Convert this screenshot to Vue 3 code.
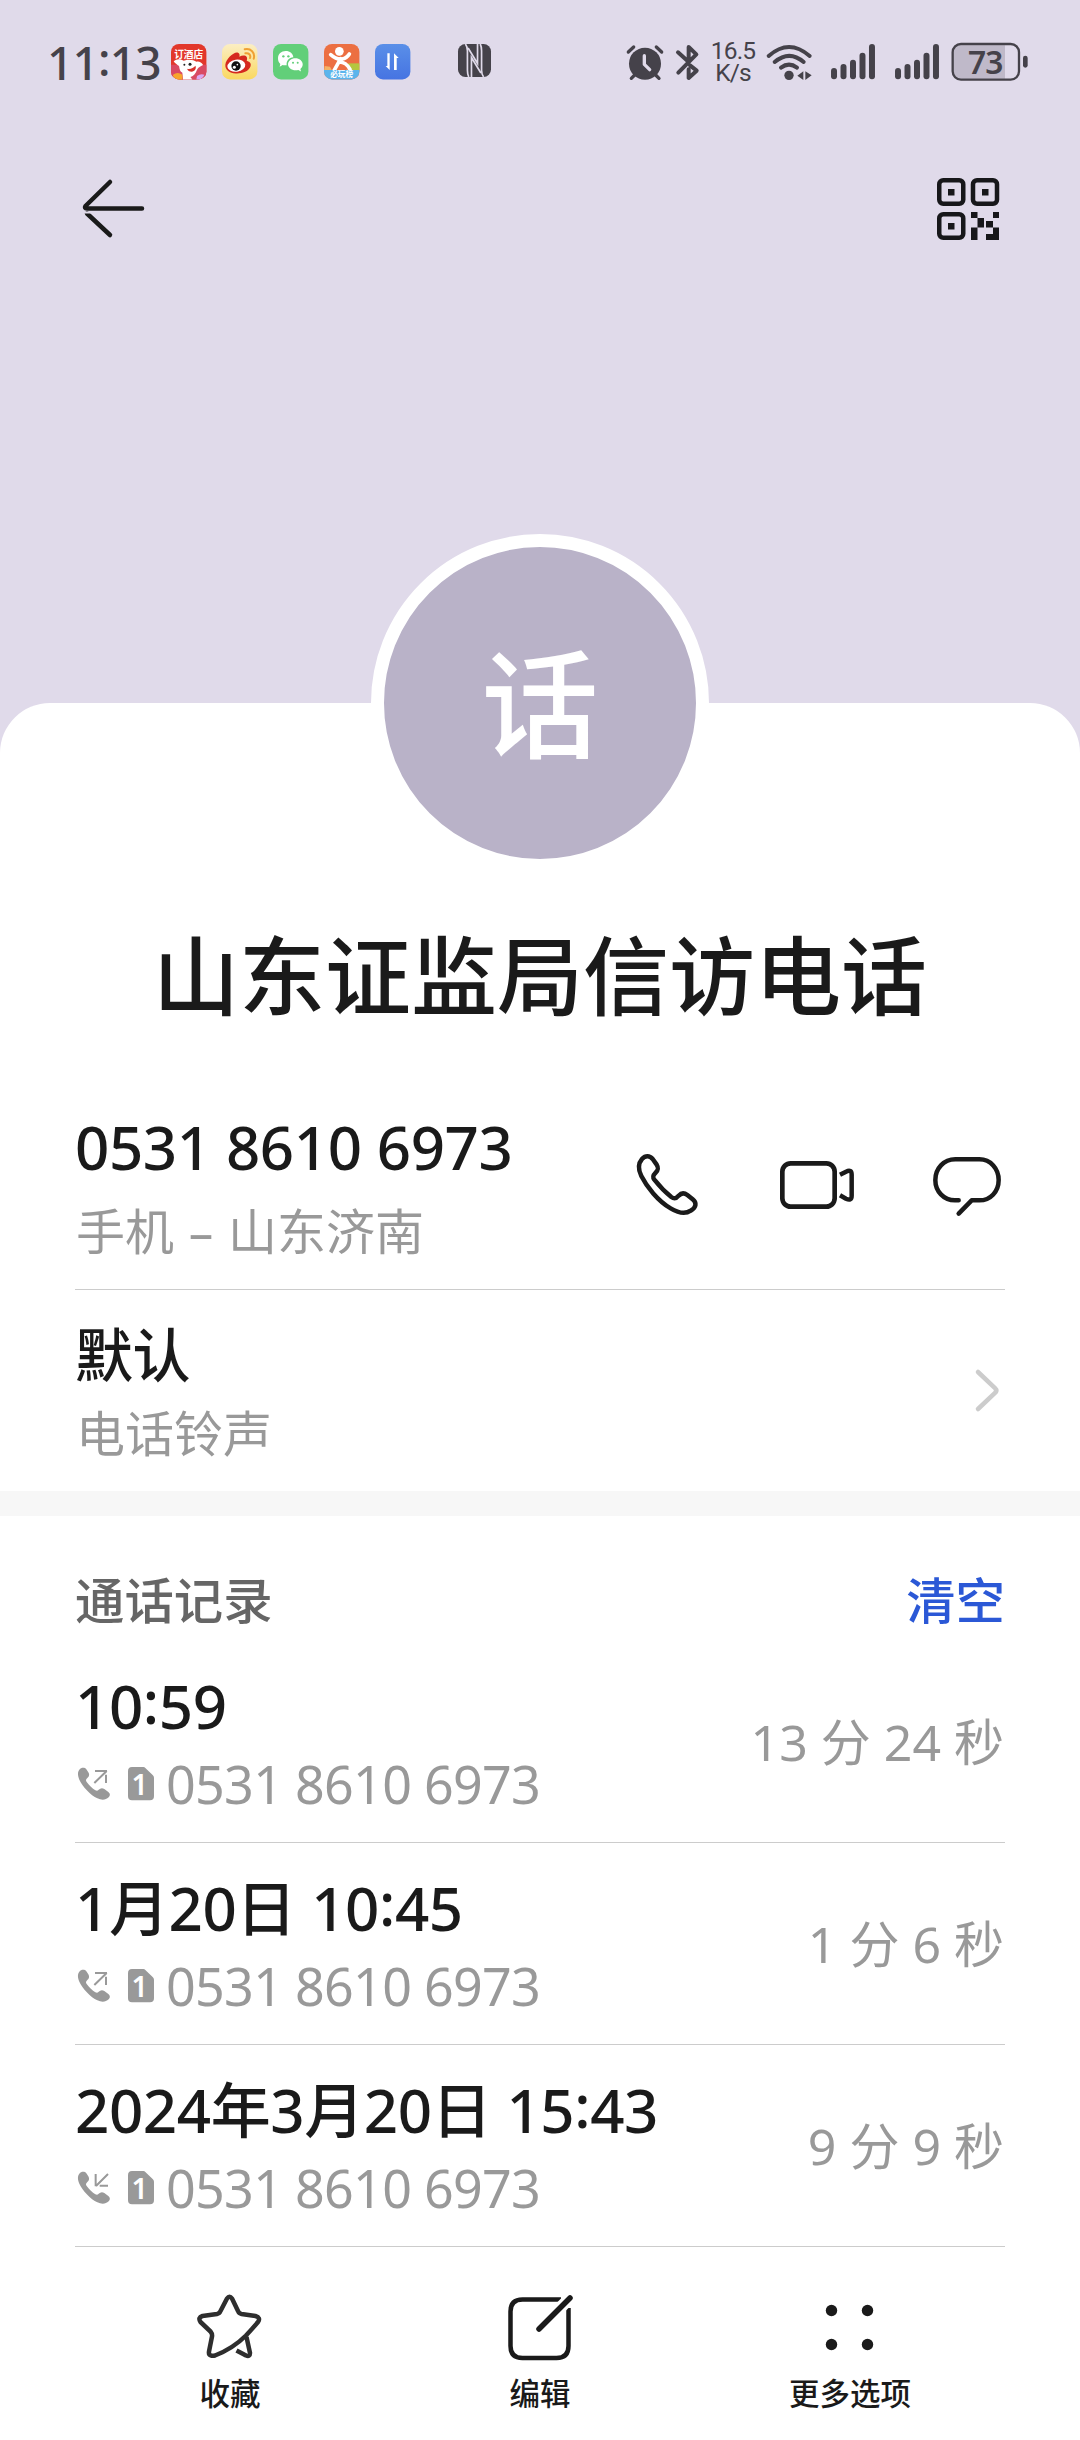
<template>
  <div class="contact-page">
    <header class="hero">
      <div class="status-bar">
        <span class="clock">11<span class="colon">:</span>13</span>

        <div class="app-icons">
          <!-- hotel / shopping app -->
          <svg class="app-icon" viewBox="0 0 106 106">
            <rect width="106" height="106" rx="24" fill="#e2372b" />
            <path d="M0 62h106v20a24 24 0 0 1-24 24H24A24 24 0 0 1 0 82z" fill="#d94a63" />
            <text x="53" y="42" class="app-text" font-size="29" fill="#fff">订酒店</text>
            <path d="M8 52c8-9 22-8 30-2 12-5 30-4 38 3 8-2 16 2 20 10-8 5-14 6-18 14-4 12-12 20-20 22l6 7H36l-2-20C26 82 26 74 24 66 18 62 12 58 8 52z" fill="#fff" />
            <circle cx="40" cy="62" r="3" fill="#222" />
            <circle cx="57" cy="61" r="4.500" fill="#222" />
            <path d="M48 74c10 2 20-2 25-9 4 8-2 17-11 18-7 0-12-3-14-9z" fill="#d8312b" />
            <path d="M6 92q14-10 28 0v14H20Q10 104 6 96z" fill="#f8a52b" />
            <path d="M78 96q10-8 22-4-5 12-16 14h-8z" fill="#d9a8f0" />
          </svg>
          <!-- weibo -->
          <svg class="app-icon" viewBox="0 0 106 106">
            <defs>
              <linearGradient id="weibo" x1="0" y1="0" x2="0" y2="1">
                <stop offset="0" stop-color="#fbeec4" />
                <stop offset="1" stop-color="#fad860" />
              </linearGradient>
            </defs>
            <rect width="106" height="106" rx="24" fill="url(#weibo)" />
            <path d="M10 62C12 44 36 22 48 26c6 3 5 8 4 12 8-4 18-5 22 1 2 4 1 8 0 11 10 3 15 9 11 18-6 15-26 21-44 20C23 87 9 78 10 62z" fill="#d5291f" />
            <ellipse cx="43" cy="65" rx="27" ry="18" fill="#fff" transform="rotate(-8 43 65)" />
            <circle cx="42" cy="66" r="14" fill="#111" />
            <circle cx="37" cy="70" r="4.500" fill="#fff" />
            <circle cx="46" cy="62" r="2.500" fill="#fff" />
            <path d="M68 16c18-4 32 10 27 28M70 28c10-2 17 5 14 14" fill="none" stroke="#f0a033" stroke-width="6" stroke-linecap="round" />
          </svg>
          <!-- wechat -->
          <svg class="app-icon" viewBox="0 0 106 106">
            <rect width="106" height="106" rx="24" fill="#62cf79" />
            <path d="M38 21c13 0 22 8 23 19-13 1-22 11-20 24-4 0-9 0-12-1l-9 5 2-8c-5-4-7-9-7-17 0-13 10-22 23-22z" fill="#fff" />
            <path d="M67 43c12 0 22 8 22 18 0 6-3 11-7 14l2 7-8-4c-17 4-31-5-31-17 0-10 10-18 22-18z" fill="#fff" />
            <g fill="#62cf79">
              <circle cx="31" cy="37" r="3.500" />
              <circle cx="46" cy="37" r="3.500" />
              <circle cx="60" cy="56" r="3" />
              <circle cx="74" cy="56" r="3" />
            </g>
          </svg>
          <!-- reviews app -->
          <svg class="app-icon" viewBox="0 0 106 106">
            <rect width="106" height="106" rx="24" fill="#ec6f42" />
            <path d="M72 58h34v22H72z" fill="#b5c63f" />
            <path d="M2 66l16 2 8 14H0z" fill="#f4b266" />
            <circle cx="46" cy="22" r="13" fill="#fff" />
            <path d="M20 32q18 16 34 13 14-2 22-15M50 44L30 80M46 54q20 0 32 22" fill="none" stroke="#fff" stroke-width="11" stroke-linecap="round" />
            <path d="M0 78h106v4a24 24 0 0 1-24 24H24A24 24 0 0 1 0 82z" fill="#5bb4ec" />
            <text x="53" y="100" class="app-text" font-size="23" fill="#fff">必玩榜</text>
          </svg>
          <!-- data transfer -->
          <svg class="app-icon" viewBox="0 0 106 106">
            <defs>
              <linearGradient id="transfer" x1="0" y1="0" x2="0" y2="1">
                <stop offset="0" stop-color="#5a8fe8" />
                <stop offset="1" stop-color="#4674e2" />
              </linearGradient>
            </defs>
            <rect width="106" height="106" rx="24" fill="url(#transfer)" />
            <path d="M37 28h7v50L32 66h5zM57 28l14 14h-6v36h-8z" fill="#fff" />
          </svg>
        </div>

        <svg class="nfc" viewBox="0 0 98 98">
          <rect width="98" height="98" rx="22" fill="#45424a" />
          <path d="M22 0q6 8 6 20v58q0 12 4 20M76 98q-6-8-6-20V20q0-12-4-20" fill="none" stroke="#e0daea" stroke-width="5" />
          <path d="M40 98V40l28 46M58 0v58L30 12" fill="none" stroke="#e0daea" stroke-width="5" />
        </svg>

        <div class="status-right">
          <svg class="status-system" viewBox="75 60 225 120" width="75" height="40">
            <circle cx="135" cy="125" r="48" fill="#45424a" />
            <path d="M133 101v26l16 16" fill="none" stroke="#e0daea" stroke-width="10" stroke-linecap="round" stroke-linejoin="round" />
            <path d="M85 90l16-15M169 75l16 15M94 169l10-10M177 169l-10-10" class="st" stroke-width="10" />
            <path d="M234 91l29 26M266 114V75l23 22-54 55M270 130l20 16-24 22v-26" class="st" stroke-width="12" />
          </svg>
          <div class="net-speed">
            <span>16.5</span>
            <span>K/s</span>
          </div>
          <svg class="wifi" viewBox="492 60 144 120" width="48" height="40">
            <path d="M503 102q61-54 123 0M521 120q44-37 87 0M540 137q24-18 48 0" class="st" stroke-width="12" />
            <circle cx="564" cy="160" r="14" fill="#45424a" />
            <path d="M589 161l18-13v26zM613 148l19 12-19 14z" fill="#45424a" />
          </svg>
          <svg v-for="n in 2" :key="n" class="signal" viewBox="0 0 132 106" width="44" height="35.300">
            <rect v-for="bar in signalBars" :key="bar.x" :x="bar.x" :y="bar.y" width="18" :height="106 - bar.y" rx="9" fill="#45424a" />
          </svg>
          <svg class="battery" viewBox="1053 62 234 120" width="78" height="40">
            <path d="M1080 72h135v100h-135q-20 0-20-20V92q0-20 20-20z" fill="#bfb9c9" />
            <rect x="1058" y="68" width="199" height="107" rx="25" fill="none" stroke="#45424a" stroke-width="7" />
            <rect x="1269" y="103" width="14" height="36" rx="7" fill="#45424a" />
            <text x="1156" y="158" class="battery-text">73</text>
          </svg>
        </div>
      </div>

      <nav class="nav-bar">
        <button class="icon-button">
          <svg viewBox="80 176 66 66" width="66" height="66">
            <path d="M110 182L85.500 206q-1.500 2.500 1.500 2.500H142" class="line" stroke-width="4.500" />
            <path d="M87 213.500L110 235" class="line" stroke-width="4.500" />
            <path d="M82 211.500h10v2H82z" fill="#e0daea" />
          </svg>
        </button>
        <button class="icon-button">
          <svg viewBox="0 0 62 62" width="62" height="62">
            <g fill="none" stroke="#17171a" stroke-width="4.500">
              <rect x="2.250" y="2.250" width="24" height="23.500" rx="4" />
              <rect x="36" y="2.250" width="24" height="23.500" rx="4" />
              <rect x="2.250" y="36.250" width="24" height="23.500" rx="4" />
            </g>
            <path d="M11 11h6.500v6.500H11zM45 11h6.500v6.500H45zM11 45h6.500v6.500H11zM34 34h6.500v6H34zM56 34h6v6h-6zM40.500 40h6.500v9.500h-6.500zM49 43h7v6.500h-7zM34 49.500h6.500V62H34zM56 49.500h6V62H49v-6h7z" fill="#17171a" />
          </svg>
        </button>
      </nav>
    </header>

    <main class="card">
      <div class="avatar">{{ contact.initial }}</div>
      <h1 class="contact-name">{{ contact.name }}</h1>

      <section class="phone-row">
        <div class="phone-text">
          <p class="row-title">{{ contact.phone }}</p>
          <p class="row-subtitle">手机<span class="dash">–</span>山东济南</p>
        </div>
        <div class="phone-actions">
          <button class="icon-button">
            <svg viewBox="81 75 240 240" width="80" height="80">
              <path d="M158 117c-9-11-22-11-32 0-12 14-12 31-2 51 16 32 50 75 88 97 23 14 44 18 60 7 18-10 18-24 6-34l-16-13c-10-8-18-7-26 2-8 10-14 10-22 4-19-15-36-33-51-52-6-8-4-13 4-21 9-9 9-14 3-24z" class="line" stroke-width="13.500" />
            </svg>
          </button>
          <button class="icon-button">
            <svg viewBox="531 75 240 240" width="80" height="80">
              <rect x="547" y="130" width="157" height="130" rx="25" class="line" stroke-width="14" />
              <path d="M720 164l18-9q17-8 17 9v63q0 17-17 9l-18-10" class="line butt" stroke-width="13.500" />
            </svg>
          </button>
          <button class="icon-button">
            <svg viewBox="981 75 240 240" width="80" height="80">
              <path d="M1076 241h-11c-34 0-59-27-59-61s25-62 60-62h72c34 0 58 28 58 62s-24 61-58 61h-23l-39 40" class="line" stroke-width="13.500" />
            </svg>
          </button>
        </div>
      </section>

      <section class="ringtone-row">
        <div>
          <p class="row-title">默认</p>
          <p class="row-subtitle">电话铃声</p>
        </div>
        <svg class="chevron" viewBox="0 0 30 50" width="30" height="50">
          <path d="M3 6l17 16q2.500 2.500 0 5L3 43" fill="none" stroke="#ccc" stroke-width="4.500" stroke-linecap="round" />
        </svg>
      </section>

      <div class="band"></div>

      <section class="call-log">
        <div class="log-header">
          <h2>通话记录</h2>
          <button class="clear-button">清空</button>
        </div>

        <div v-for="call in calls" :key="call.hour" class="log-row">
          <div>
            <p class="row-title">{{ call.hour }}<span class="colon">:</span>{{ call.minute }}</p>
            <p class="log-detail">
              <svg viewBox="51 345 102 105" width="34" height="35">
                <path d="M58 356c6-7 16-7 21-1l6 9c4 7 3 12-3 17-5 5-5 8-2 12 8 11 17 19 26 25 4 2 7 2 10-2 5-5 11-6 17-2l12 9c6 5 6 11 1 16-9 9-22 9-34 3-20-10-44-34-54-56-5-12-6-23 0-30z" fill="#999" />
                <path v-if="call.type === 'out'" d="M103 396l37-36M105 360h36M138 371v25" fill="none" stroke="#999" stroke-width="6" />
                <path v-else d="M144 357l-36 36M107 357v37M119 392h25" fill="none" stroke="#999" stroke-width="6" />
              </svg>
              <svg class="sim" viewBox="204 350 78 100" width="26" height="33.300">
                <path d="M216 350h34q4 0 6 3l22 21q4 4 4 8v56q0 12-12 12h-54q-12 0-12-12v-76q0-12 12-12z" fill="#999" />
                <text x="239" y="433" class="sim-text">1</text>
              </svg>
              <span class="log-number">{{ contact.phone }}</span>
            </p>
          </div>
          <span class="duration">{{ call.duration }}</span>
        </div>
      </section>

      <footer class="toolbar">
        <button class="tool">
          <svg viewBox="195 2292 70 70" width="70" height="70">
            <path d="M211 2355.500q-2.500-.5-2-4l3-15q.5-2.500-1.500-5l-10-9.500q-3-4.500 2-6l14.500-2q2.500-.5 3.500-3l6.500-12.500q2.500-3.500 5 0l6 12.500q1 2.500 3.500 3l14 2q5.500 1.500 2.500 6-6 7-12 13.500-13 13-31 20-2.500.7-4 0z" class="line soft" stroke-width="4.500" />
            <path d="M246.500 2337l3.500 16q0 4-4 2.500l-9.500-5" class="line soft butt" stroke-width="4.500" />
          </svg>
          <span>收藏</span>
        </button>
        <button class="tool">
          <svg viewBox="505 2292 70 70" width="70" height="70">
            <path d="M561 2299.500h-38.500q-12 0-12 12V2346q0 12 12 12h34q12 0 12-12v-38" class="line butt" stroke-width="4.500" />
            <path d="M539 2329l31-31" class="gap" />
            <path d="M539 2329l31-31" class="line" stroke-width="5.500" />
          </svg>
          <span>编辑</span>
        </button>
        <button class="tool">
          <svg viewBox="815 2292 70 70" width="70" height="70">
            <g fill="#1a1a1a">
              <circle cx="831.500" cy="2310.500" r="5.700" />
              <circle cx="867.500" cy="2310.500" r="5.700" />
              <circle cx="831.500" cy="2344.500" r="5.700" />
              <circle cx="867.500" cy="2344.500" r="5.700" />
            </g>
          </svg>
          <span>更多选项</span>
        </button>
      </footer>
    </main>
  </div>
</template>

<script setup>
import { ref } from 'vue'

const contact = {
  initial: '话',
  name: '山东证监局信访电话',
  phone: '0531 8610 6973'
}

const calls = ref([
  { hour: '10', minute: '59', type: 'out', duration: '13 分 24 秒' },
  { hour: '1月20日 10', minute: '45', type: 'out', duration: '1 分 6 秒' },
  { hour: '2024年3月20日 15', minute: '43', type: 'in', duration: '9 分 9 秒' }
])

const signalBars = [
  { x: 0, y: 72 },
  { x: 28.5, y: 60 },
  { x: 57, y: 47 },
  { x: 85.5, y: 26 },
  { x: 114, y: 0 }
]
</script>

<style>
body {
  margin: 0;
  background: #fff;
}
</style>

<style scoped>
.contact-page {
  width: 1080px;
  height: 2440px;
  overflow: hidden;
  background: #e0daea;
  color: #1a1a1a;
  font-family: "Noto Sans", "Noto Sans CJK SC", sans-serif;
}

.contact-page * {
  box-sizing: border-box;
}

p,
h1,
h2 {
  margin: 0;
}

svg {
  display: block;
  flex: none;
  overflow: visible;
}

button {
  padding: 0;
  border: none;
  background: none;
  color: inherit;
  font: inherit;
}

.hero {
  height: 703px;
}

/* status bar */
.status-bar {
  display: flex;
  align-items: center;
  height: 123px;
  padding: 0 51px 0 47px;
  color: #45424a;
}

.clock {
  width: 124px;
  font-size: 46px;
  font-weight: 500;
  letter-spacing: -0.800px;
  line-height: 60px;
  white-space: nowrap;
}

/* sits at the middle of the digits */
.colon {
  line-height: 0;
  vertical-align: 0.080em;
}

.app-icons {
  display: flex;
  gap: 15.600px;
}

.app-icon {
  width: 35.400px;
  height: 35.400px;
}

.app-text {
  font-weight: 700;
  text-anchor: middle;
}

.nfc {
  width: 33px;
  height: 33px;
  margin: 0 auto 3px 48px;
}

.status-right {
  display: flex;
  align-items: center;
}

.net-speed {
  display: flex;
  flex-direction: column;
  width: 54px;
  margin: 0 5px 0 6px;
  font-family: Roboto, sans-serif;
  font-size: 24.500px;
  letter-spacing: -0.800px;
  line-height: 22px;
  text-align: center;
}

.wifi {
  margin-right: 18px;
}

.signal {
  margin-right: 20px;
}

.signal + .battery {
  margin-left: -8px;
}

.st {
  fill: none;
  stroke: #45424a;
  stroke-linecap: round;
  stroke-linejoin: round;
}

.battery-text {
  fill: #45424a;
  font-size: 95px;
  font-weight: 600;
  letter-spacing: -2px;
  text-anchor: middle;
}

/* top navigation */
.nav-bar {
  display: flex;
  align-items: center;
  justify-content: space-between;
  height: 172px;
  padding: 0 81px 0 80px;
}

.line {
  fill: none;
  stroke: #1a1a1a;
  stroke-linecap: round;
  stroke-linejoin: round;
}

.line.butt {
  stroke-linecap: butt;
}

.line.soft {
  stroke: #2e2e2e;
}

.gap {
  fill: none;
  stroke: #fff;
  stroke-width: 12;
}

/* contact card */
.card {
  display: flex;
  flex-direction: column;
  height: 1737px;
  border-radius: 50px 50px 0 0;
  background: #fff;
}

.avatar {
  flex: none;
  width: 338px;
  height: 338px;
  margin: -169px auto 0;
  border: 13px solid #fff;
  border-radius: 50%;
  background: #b9b2c8;
  color: #fff;
  font-size: 117px;
  font-weight: 500;
  line-height: 314px;
  text-align: center;
}

.contact-name {
  margin-top: 43px;
  font-size: 86px;
  font-weight: 500;
  line-height: 122px;
  text-align: center;
}

.phone-row,
.ringtone-row,
.log-row {
  display: flex;
  justify-content: space-between;
  margin: 0 75px;
}

.phone-row {
  height: 253px;
  padding-top: 75px;
  border-bottom: 1px solid #ccc;
}

.row-title {
  font-size: 60px;
  font-weight: 500;
  letter-spacing: -0.400px;
  line-height: 70px;
  white-space: nowrap;
}

.ringtone-row .row-title {
  font-size: 58px;
}

.row-subtitle {
  margin-top: 13px;
  padding-left: 1px;
  color: #999;
  font-size: 49px;
  line-height: 60px;
}

.phone-row .row-subtitle {
  margin-top: 19px;
}

.dash {
  display: inline-block;
  width: 54px;
  text-align: center;
}

.phone-actions {
  display: flex;
  gap: 70px;
  margin: 33px -2px 0 0;
}

.phone-actions .icon-button {
  height: 80px;
}

.ringtone-row {
  align-items: center;
  height: 201px;
  padding-top: 1px;
}

.band {
  height: 25px;
  background: #f7f7f7;
}

.log-header {
  display: flex;
  justify-content: space-between;
  height: 125px;
  padding: 54px 75px 0;
  color: #666;
  font-size: 49.400px;
  font-weight: 500;
  line-height: 60px;
}

.log-header h2 {
  font-size: inherit;
  font-weight: inherit;
}

.clear-button {
  height: 60px;
  color: #2b58d6;
}

.log-row {
  align-items: center;
  height: 202px;
  padding: 1px 0 0;
  border-bottom: 1px solid #ccc;
}

.log-detail {
  display: flex;
  align-items: center;
  height: 60px;
  margin-top: 13px;
  padding-left: 2px;
  color: #999;
}

.sim {
  margin: 0 12px 0 17px;
}

.sim-text {
  fill: #fff;
  font-size: 86px;
  font-weight: 600;
  text-anchor: middle;
}

.log-number,
.duration {
  color: #999;
  font-size: 52px;
  letter-spacing: -0.700px;
  line-height: 60px;
  white-space: nowrap;
}

.duration {
  padding-right: 1px;
  font-size: 50px;
  letter-spacing: 0;
}

/* bottom toolbar */
.toolbar {
  display: flex;
  height: 193px;
  padding: 45px 75px 0;
}

.tool {
  display: flex;
  flex: 1;
  flex-direction: column;
  align-items: center;
  font-size: 30.500px;
  font-weight: 500;
  line-height: 40px;
}

.tool span {
  margin-top: 11px;
}
</style>
